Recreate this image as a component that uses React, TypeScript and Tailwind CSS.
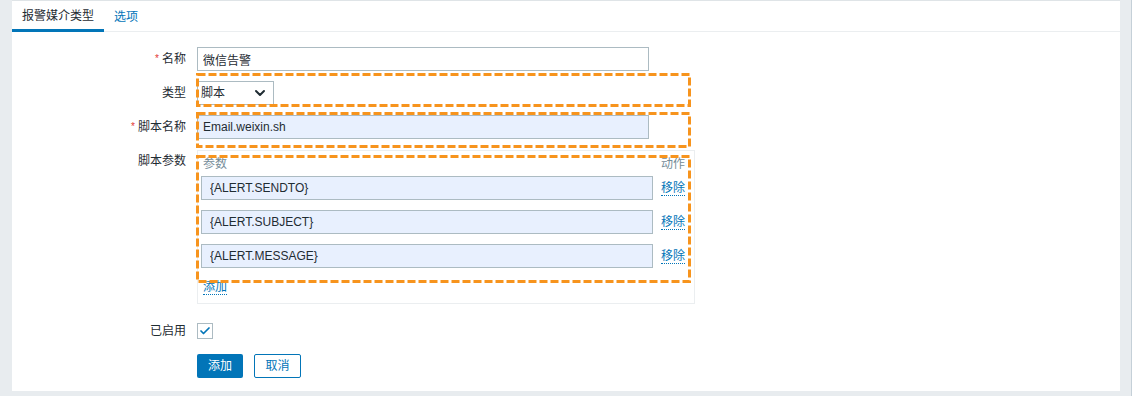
import { Check, ChevronDown } from "lucide-react";

const font = "font-['Liberation_Sans','Noto_Sans_CJK_SC',sans-serif]";

const inputClass =
  "h-6 w-[452px] border border-[#acbbc2] px-[5px] text-xs text-[#1f2c33] outline-none";

const linkClass =
  "border-b border-dotted border-[#0275b8] leading-[14px] text-xs text-[#0275b8]";

const params = ["{ALERT.SENDTO}", "{ALERT.SUBJECT}", "{ALERT.MESSAGE}"];

// orange dashed annotation frames, page coordinates
const frames = [
  { left: 196, top: 73, w: 495, h: 34 },
  { left: 196, top: 112, w: 495, h: 36 },
  { left: 196, top: 155, w: 495, h: 128 },
];

function Frame({ left, top, w, h }: { left: number; top: number; w: number; h: number }) {
  return (
    <svg
      width={w}
      height={h}
      className="pointer-events-none absolute"
      style={{ left, top }}
    >
      <rect
        x={1.5}
        y={1.5}
        width={w - 3}
        height={h - 3}
        fill="none"
        stroke="#f7941d"
        strokeWidth={3}
        strokeDasharray="8 3"
      />
    </svg>
  );
}

function Label({ children, required }: { children: string; required?: boolean }) {
  return (
    <div className="flex h-6 items-center justify-end text-xs text-[#1f2c33]">
      {required && <span className="mr-[3px] text-[10px] text-[#e33734]">*</span>}
      {children}
    </div>
  );
}

export default function App() {
  return (
    <div className={`relative flex h-[396px] w-[1132px] bg-[#e8ecef] ${font}`}>
      <div className="ml-3 flex h-[391px] w-[1108px] flex-col border-t border-[#dfe4e7] bg-white">
        <div className="flex h-[31px] border-b border-[#ebeef0] text-xs">
          <div className="flex h-[31px] w-[92px] items-center justify-center border-b-[3px] border-[#0275b8] pt-[1px] text-[#1f2c33]">
            报警媒介类型
          </div>
          <div className="flex h-[31px] items-center px-[10px] pt-[1px] text-[#0275b8]">选项</div>
        </div>

        <div className="grid grid-cols-[174px_1fr] gap-x-[11px] pt-[15px]">
          <Label required>名称</Label>
          <input className={`${inputClass} bg-white`} defaultValue="微信告警" />

          <div className="col-span-2 h-[10px]" />
          <Label>类型</Label>
          <div className="flex h-6 w-[77px] items-center justify-between border border-[#acbbc2] bg-white pl-[3px] pr-[5px] text-xs text-[#1f2c33]">
            脚本
            <ChevronDown className="h-4 w-4" strokeWidth={3} />
          </div>

          <div className="col-span-2 h-[10px]" />
          <Label required>脚本名称</Label>
          <input className={`${inputClass} bg-[#e8f0fe]`} defaultValue="Email.weixin.sh" />

          <div className="col-span-2 h-[11px]" />
          <div className="flex justify-end pt-[3px] text-xs text-[#1f2c33]">脚本参数</div>
          <div className="flex h-[154px] w-[498px] flex-col border border-[#ebeef0] pl-[3px] pr-[9px] pt-[5px]">
            <div className="flex justify-between pl-[2px] text-xs leading-[16px] text-[#768d99]">
              <span>参数</span>
              <span>动作</span>
            </div>
            <div className="mt-[4px] flex flex-col gap-[10px]">
              {params.map((p) => (
                <div key={p} className="flex items-center justify-between">
                  <input className={`${inputClass} bg-[#e8f0fe] pl-[8px]`} defaultValue={p} />
                  <span className={linkClass}>移除</span>
                </div>
              ))}
            </div>
            <div className="mt-[6px] pl-[2px]">
              <span className={linkClass}>添加</span>
            </div>
          </div>

          <div className="col-span-2 h-[15px]" />
          <Label>已启用</Label>
          <div className="flex h-6 items-center">
            <div className="flex h-4 w-4 items-center justify-center border border-[#acbbc2] bg-white">
              <Check className="h-3 w-3 text-[#0275b8]" strokeWidth={3.5} />
            </div>
          </div>

          <div className="col-span-2 h-[11px]" />
          <div />
          <div className="flex gap-[11px]">
            <button className="h-6 w-[46px] rounded-[2px] bg-[#0275b8] text-xs text-white">添加</button>
            <button className="h-6 w-[47px] rounded-[2px] border border-[#0275b8] bg-white text-xs text-[#0275b8]">
              取消
            </button>
          </div>
        </div>
      </div>
      <div className="ml-auto w-[1px] bg-[#c5d0d8]" />
      {frames.map((f) => (
        <Frame key={f.top} {...f} />
      ))}
    </div>
  );
}
